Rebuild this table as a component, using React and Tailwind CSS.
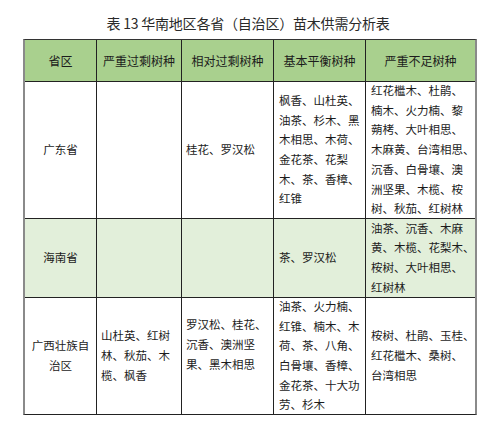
import React from "react";

const FONT = { fontFamily: '"Noto Sans CJK SC", "Noto Sans", sans-serif' };

const widths = ["w-[72px]", "w-[85px]", "w-[92px]", "w-[92px]", "w-[109px]"];

function Cell({ col, lines, center, extra = "", last }) {
  return (
    <div
      className={`${widths[col]} ${last ? "" : "border-r border-[#222]"} flex flex-col justify-center ${
        center ? "items-center text-center" : "items-start pl-[5px]"
      } ${extra}`}
    >
      {lines.map((l, i) => (
        <div key={i} className="whitespace-nowrap leading-[19.7px]">
          {l}
        </div>
      ))}
    </div>
  );
}

function Row({ h, bg, cells, border = true }) {
  return (
    <div className={`flex ${h} ${bg} ${border ? "border-b border-[#222]" : ""}`}>
      {cells}
    </div>
  );
}

export default function App() {
  return (
    <div className="w-[500px] h-[445px] bg-white text-[#1c1c1c]" style={FONT}>
      <div className="pt-[13px] pr-[4px] text-center text-[14px] leading-[20px] font-normal text-[#2a2a2a] tracking-[-0.2px]">
        表 13 华南地区各省（自治区）苗木供需分析表
      </div>
      <div className="mt-[6px] ml-[23px] w-[454px] border-l-2 border-r-2 border-l-[#8a8a8a] border-r-[#8a8a8a] border-t border-b border-t-[#333] border-b-[#222] text-[11.5px]">
        <Row
          h="h-[42px]"
          bg="bg-[#a9d08e]"
          cells={[
            <Cell key="a" col={0} center lines={["省区"]} extra="text-[12px]" />,
            <Cell key="b" col={1} center lines={["严重过剩树种"]} extra="text-[12px]" />,
            <Cell key="c" col={2} center lines={["相对过剩树种"]} extra="text-[12px]" />,
            <Cell key="d" col={3} center lines={["基本平衡树种"]} extra="text-[12px]" />,
            <Cell key="e" col={4} center last lines={["严重不足树种"]} extra="text-[12px]" />,
          ]}
        />
        <Row
          h="h-[137px]"
          bg="bg-white"
          cells={[
            <Cell key="a" col={0} center lines={["广东省"]} />,
            <Cell key="b" col={1} lines={[]} />,
            <Cell key="c" col={2} lines={["桂花、罗汉松"]} extra="!pl-[4px]" />,
            <Cell
              key="d"
              col={3}
              lines={["枫香、山杜英、", "油茶、杉木、黑", "木相思、木荷、", "金花茶、花梨", "木、茶、香樟、", "红锥"]}
            />,
            <Cell
              key="e"
              col={4}
              last
              lines={[
                "红花檵木、杜鹃、",
                "楠木、火力楠、黎",
                "蒴栲、大叶相思、",
                "木麻黄、台湾相思、",
                "沉香、白骨壤、澳",
                "洲坚果、木榄、桉",
                "树、秋茄、红树林",
              ]}
            />,
          ]}
        />
        <Row
          h="h-[79px]"
          bg="bg-[#e2efda]"
          cells={[
            <Cell key="a" col={0} center lines={["海南省"]} />,
            <Cell key="b" col={1} lines={[]} />,
            <Cell key="c" col={2} lines={[]} />,
            <Cell key="d" col={3} lines={["茶、罗汉松"]} />,
            <Cell
              key="e"
              col={4}
              last
              lines={["油茶、沉香、木麻", "黄、木榄、花梨木、", "桉树、大叶相思、", "红树林"]}
            />,
          ]}
        />
        <Row
          h="h-[116px]"
          bg="bg-white"
          border={false}
          cells={[
            <Cell key="a" col={0} center lines={["广西壮族自", "治区"]} />,
            <Cell key="b" col={1} lines={["山杜英、红树", "林、秋茄、木", "榄、枫香"]} extra="!pl-[4px]" />,
            <Cell
              key="c"
              col={2}
              lines={["罗汉松、桂花、", "沉香、澳洲坚", "果、黑木相思"]}
              extra="!pl-[4px] pb-[22px]"
            />,
            <Cell
              key="d"
              col={3}
              lines={["油茶、火力楠、", "红锥、楠木、木", "荷、茶、八角、", "白骨壤、香樟、", "金花茶、十大功", "劳、杉木"]}
            />,
            <Cell key="e" col={4} last lines={["桉树、杜鹃、玉桂、", "红花檵木、桑树、", "台湾相思"]} />,
          ]}
        />
      </div>
    </div>
  );
}
